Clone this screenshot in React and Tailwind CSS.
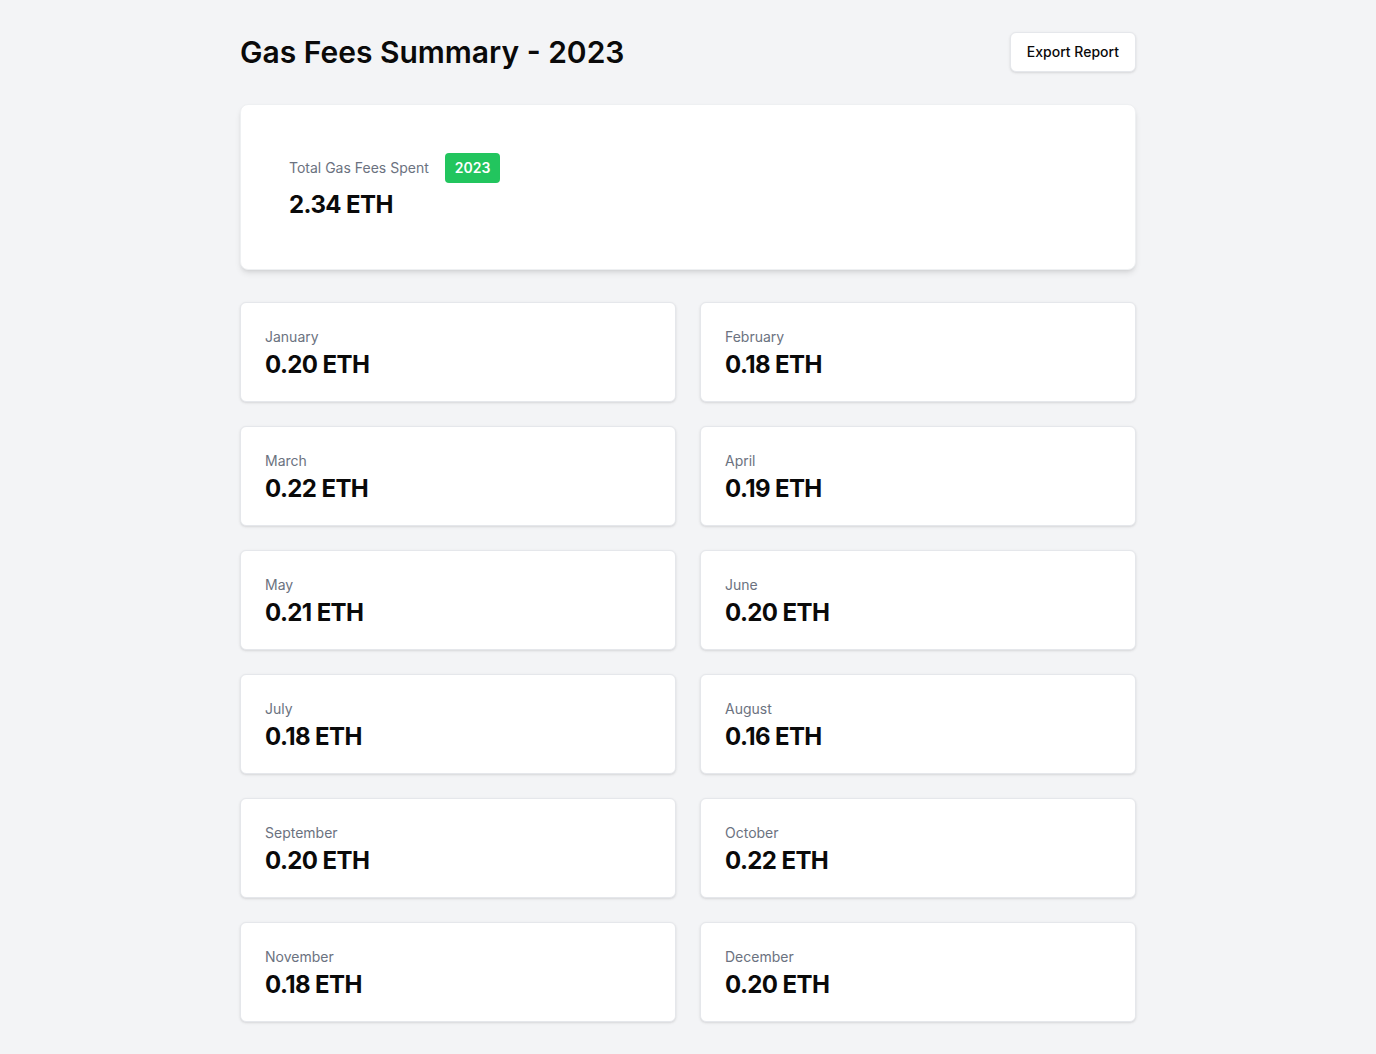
import React from "react";

const months = [
  { name: "January", value: "0.20" },
  { name: "February", value: "0.18" },
  { name: "March", value: "0.22" },
  { name: "April", value: "0.19" },
  { name: "May", value: "0.21" },
  { name: "June", value: "0.20" },
  { name: "July", value: "0.18" },
  { name: "August", value: "0.16" },
  { name: "September", value: "0.20" },
  { name: "October", value: "0.22" },
  { name: "November", value: "0.18" },
  { name: "December", value: "0.20" },
];

const App = () => {
  return (
    <div
      className="min-h-screen bg-[#f3f4f6] text-gray-900"
      style={{ fontFamily: "Inter, 'Liberation Sans', sans-serif" }}
    >
      <div className="max-w-4xl mx-auto py-8">
        {/* header */}
        <div className="flex items-center justify-between h-10">
          <h1 className="text-3xl font-semibold text-[#0a0a0a]">
            Gas Fees Summary - 2023
          </h1>
          <button className="h-10 px-4 bg-white border border-[#e5e7eb] rounded-md shadow-sm text-sm font-medium text-[#0a0a0a]">
            Export Report
          </button>
        </div>

        {/* total card */}
        <div className="mt-8 bg-white rounded-lg border border-[#eef0f2] shadow-md p-12">
          <div className="flex items-center gap-4">
            <p className="text-sm text-[#6b7280]">Total Gas Fees Spent</p>
            <span className="bg-[#22c55e] text-white text-sm font-semibold px-2.5 py-[5px] leading-5 rounded">
              2023
            </span>
          </div>
          <p className="mt-1.5 text-2xl leading-8 font-bold tracking-tight text-[#0a0a0a]">
            2.34 ETH
          </p>
        </div>

        {/* monthly grid */}
        <div className="mt-8 grid grid-cols-2 gap-6">
          {months.map((m) => (
            <div
              key={m.name}
              className="bg-white rounded-md border border-[#e5e7eb] shadow-sm px-6 pt-6 pb-5"
            >
              <p className="text-sm text-[#6b7280] leading-5">{m.name}</p>
              <p className="text-2xl font-bold tracking-tight leading-8 text-[#0a0a0a] mt-0.5">
                {m.value} ETH
              </p>
            </div>
          ))}
        </div>
      </div>
    </div>
  );
};

export default App;
